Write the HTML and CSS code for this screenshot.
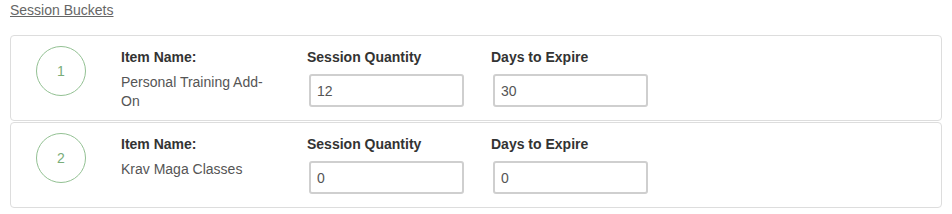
FILE: index.html
```html
<!DOCTYPE html>
<html>
<head>
    <title>Session Buckets</title>
    <meta name="viewport" content="width=device-width, initial-scale=1.0">
    <link rel="stylesheet" href="styles.css">
</head>
<body>
    <a class="section-link" href="#">Session Buckets</a>

    <div class="buckets">
        <!-- bucket 1 -->
        <div class="bucket">
            <div class="bucket-num">1</div>
            <div class="bucket-name">
                <div class="field-label">Item Name:</div>
                <div class="name-text">Personal Training Add-On</div>
            </div>
            <div class="bucket-field">
                <div class="field-label">Session Quantity</div>
                <input class="field-input" type="text" value="12">
            </div>
            <div class="bucket-field">
                <div class="field-label">Days to Expire</div>
                <input class="field-input" type="text" value="30">
            </div>
        </div>

        <!-- bucket 2 -->
        <div class="bucket">
            <div class="bucket-num">2</div>
            <div class="bucket-name">
                <div class="field-label">Item Name:</div>
                <div class="name-text">Krav Maga Classes</div>
            </div>
            <div class="bucket-field">
                <div class="field-label">Session Quantity</div>
                <input class="field-input" type="text" value="0">
            </div>
            <div class="bucket-field">
                <div class="field-label">Days to Expire</div>
                <input class="field-input" type="text" value="0">
            </div>
        </div>
    </div>
</body>
</html>
```

FILE: styles.css
```css
body {
    margin: 0;
    padding: 0 10px;
    font-family: "Liberation Sans", Arial, sans-serif;
    font-size: 14px;
    color: #333;
    background-color: #fff;
}

.section-link {
    display: inline-block;
    line-height: 20px;
    color: #666;
    text-decoration: underline;
}

.buckets {
    margin-top: 15px;
}

.bucket {
    display: flex;
    align-items: flex-start;
    height: 86px;
    box-sizing: border-box;
    border: 1px solid #ddd;
    border-radius: 4px;
    padding: 10px 0 0 25px;
    margin-bottom: 1px;
}

/* numbered circle on the left */
.bucket-num {
    width: 50px;
    height: 50px;
    box-sizing: border-box;
    border: 1px solid #93c193;
    border-radius: 50%;
    color: #79ad79;
    display: flex;
    align-items: center;
    justify-content: center;
    flex-shrink: 0;
}

.bucket-name {
    width: 150px;
    margin-left: 35px;
    margin-top: 2px;
    line-height: 19px;
}

.name-text {
    margin-top: 6px;
    color: #555;
}

.bucket-field {
    width: 184px;
    margin-top: 2px;
}

.bucket-name + .bucket-field {
    margin-left: 36px;
}

.field-label {
    font-weight: bold;
    line-height: 19px;
    color: #333;
}

.field-input {
    display: block;
    box-sizing: border-box;
    width: 155px;
    height: 33px;
    margin: 7px 0 0 2px;
    padding: 0 6px;
    border: 2px solid #cfcfcf;
    border-radius: 3px;
    font-family: inherit;
    font-size: 14px;
    color: #555;
    background: #fff;
    outline: none;
}
```
